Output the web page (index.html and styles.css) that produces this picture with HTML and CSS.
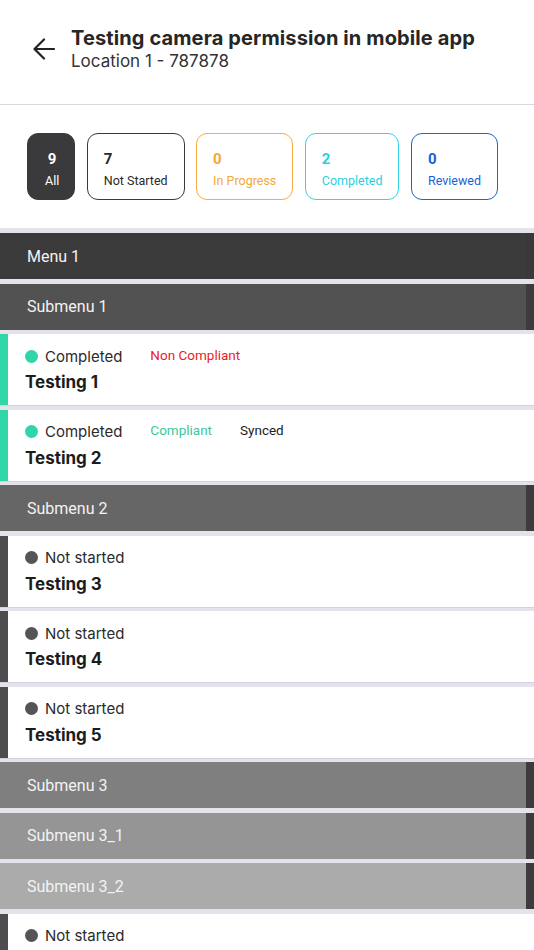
FILE: index.html
```html
<!DOCTYPE html>
<html lang="en">
<head>
<meta charset="utf-8">
<title>Testing camera permission in mobile app</title>
<link rel="stylesheet" href="styles.css">
</head>
<body>
<header class="topbar">
  <svg class="back" width="22" height="22" viewBox="0 0 22 22" aria-hidden="true">
    <path d="M21 11H2M11 1.5L1.5 11L11 20.5" fill="none" stroke="#222" stroke-width="2.2" stroke-linecap="round" stroke-linejoin="round"/>
  </svg>
  <div class="titles">
    <div class="title">Testing camera permission in mobile app</div>
    <div class="subtitle">Location 1 - 787878</div>
  </div>
</header>

<section class="filters">
  <div class="chip chip-all"><span class="num">9</span><span class="lbl">All</span></div>
  <div class="chip chip-not"><span class="num">7</span><span class="lbl">Not Started</span></div>
  <div class="chip chip-prog"><span class="num">0</span><span class="lbl">In Progress</span></div>
  <div class="chip chip-done"><span class="num">2</span><span class="lbl">Completed</span></div>
  <div class="chip chip-rev"><span class="num">0</span><span class="lbl">Reviewed</span></div>
</section>

<main class="list">
  <div class="bar bar-menu">Menu 1</div>
  <div class="bar bar-sub1">Submenu 1</div>
  <div class="item done">
    <div class="status-row">
      <span class="status"><span class="dot"></span>Completed</span>
      <span class="tag tag-red">Non Compliant</span>
    </div>
    <div class="item-title">Testing 1</div>
  </div>
  <div class="item done">
    <div class="status-row">
      <span class="status"><span class="dot"></span>Completed</span>
      <span class="tag tag-green">Compliant</span>
      <span class="tag tag-dark">Synced</span>
    </div>
    <div class="item-title">Testing 2</div>
  </div>
  <div class="bar bar-sub2">Submenu 2</div>
  <div class="item todo">
    <div class="status-row"><span class="status"><span class="dot"></span>Not started</span></div>
    <div class="item-title">Testing 3</div>
  </div>
  <div class="item todo">
    <div class="status-row"><span class="status"><span class="dot"></span>Not started</span></div>
    <div class="item-title">Testing 4</div>
  </div>
  <div class="item todo">
    <div class="status-row"><span class="status"><span class="dot"></span>Not started</span></div>
    <div class="item-title">Testing 5</div>
  </div>
  <div class="bar bar-sub3">Submenu 3</div>
  <div class="bar bar-sub31">Submenu 3_1</div>
  <div class="bar bar-sub32">Submenu 3_2</div>
  <div class="item todo">
    <div class="status-row"><span class="status"><span class="dot"></span>Not started</span></div>
  </div>
</main>
</body>
</html>
```

FILE: styles.css
```css
* { box-sizing: border-box; }

body {
  margin: 0;
  background: #ffffff;
  font-family: Roboto, "Liberation Sans", sans-serif;
  color: #222;
}

.topbar {
  height: 105px;
  display: flex;
  align-items: center;
  gap: 16px;
  padding: 0 0 6px 33px;
  border-bottom: 1px solid #d9d9dc;
  background: #fff;
}

.back { flex: none; }

.titles { display: flex; flex-direction: column; }

.title {
  font-family: Inter, "Liberation Sans", sans-serif;
  font-size: 20px;
  font-weight: 700;
  line-height: 24px;
  color: #262626;
  letter-spacing: 0.12px;
}

.subtitle {
  font-family: Inter, "Liberation Sans", sans-serif;
  font-size: 17px;
  line-height: 22px;
  color: #333;
}

.filters {
  display: flex;
  gap: 11.5px;
  padding: 28px 27px 28px;
  background: #fff;
}

.chip {
  height: 67px;
  display: flex;
  flex-direction: column;
  padding: 15px 16px 0 16px;
  border: 1.5px solid #333;
  border-radius: 11px;
  background: #fff;
}

.chip .num {
  font-size: 15px;
  font-weight: 700;
  line-height: 20px;
}

.chip .lbl {
  font-size: 12.5px;
  line-height: 18px;
  margin-top: 3px;
  white-space: nowrap;
}

.chip-all { background: #3a3a3c; border-color: #3a3a3c; color: #fff; padding-left: 17px; padding-right: 15px; }
.chip-all .num, .chip-all .lbl { text-align: center; }
.chip-not { border-color: #3a3a3a; color: #2a2a2a; }
.chip-prog { border-color: #f7ad41; color: #f5a733; }
.chip-done { border-color: #33d6e6; color: #2bcfe0; }
.chip-rev { border-color: #1d63d8; color: #1a5fd4; }

.list {
  background: #e4e3ec;
  display: flex;
  flex-direction: column;
  gap: 4.5px;
  padding-top: 5px;
}

.bar {
  height: 46px;
  display: flex;
  align-items: center;
  padding-left: 27px;
  font-size: 16px;
  color: #f3f3f3;
  border-right: 8px solid #3c3c3c;
}

.bar-menu { background: #3b3b3b; border-right-color: #393939; }
.bar-sub1 { background: #525252; }
.bar-sub2 { background: #666666; }
.bar-sub3 { background: #7f7f7f; }
.bar-sub31 { background: #959595; }
.bar-sub32 { background: #ababab; }

.item {
  height: 71px;
  background: #fff;
  border-left: 8px solid #4d4d4f;
  padding: 12px 0 0 17px;
  box-shadow: 0 1px 0 #d3d1df;
}

.item.done { border-left-color: #30d5a8; }

.status-row {
  display: flex;
  align-items: center;
  gap: 28px;
  height: 20px;
}

.status {
  display: flex;
  align-items: center;
  gap: 7px;
  font-family: Inter, "Liberation Sans", sans-serif;
  font-size: 15px;
  color: #2a2a2a;
}

.dot {
  width: 13px;
  height: 13px;
  border-radius: 50%;
  background: #555557;
}

.done .dot { background: #30d5a8; }

.tag {
  font-size: 13.5px;
  margin-top: -3px;
}

.tag-red { color: #ea1a1f; }
.tag-green { color: #3dc899; }
.tag-dark { color: #222; }

.item-title {
  margin-top: 5px;
  font-family: Inter, "Liberation Sans", sans-serif;
  font-size: 17px;
  font-weight: 700;
  line-height: 22px;
  color: #1c1c1c;
}
```
